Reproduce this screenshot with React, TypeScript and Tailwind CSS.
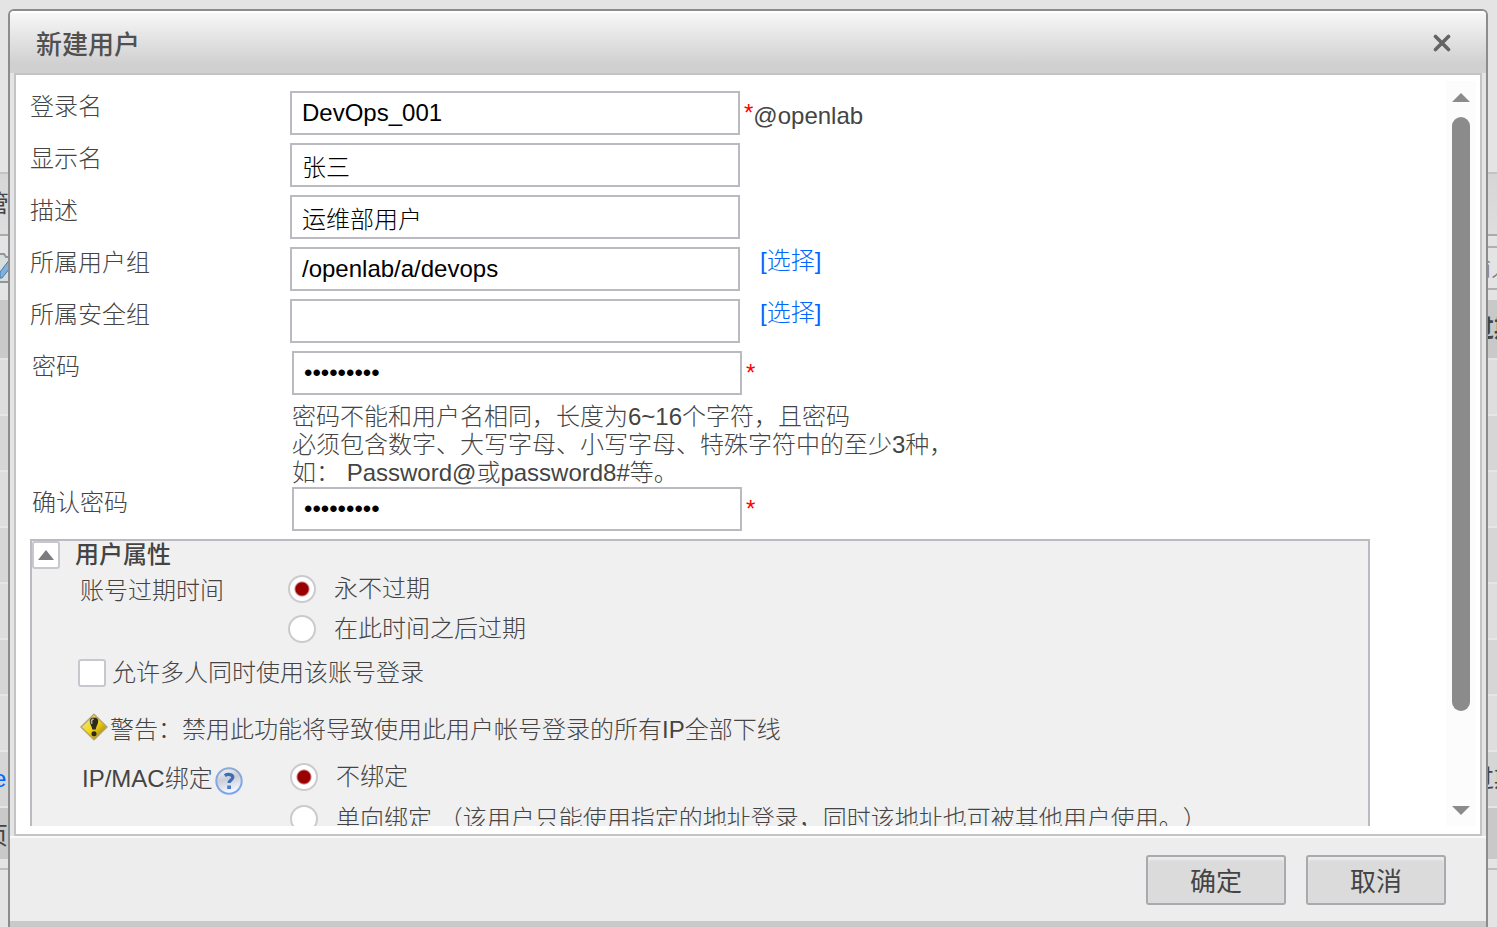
import type { ReactNode } from "react";

const inputClass =
  "h-11 w-[450px] shrink-0 border-2 border-[#bbbac1] bg-white px-[10px] text-black outline-none";

const radioClass =
  "size-7 shrink-0 appearance-none rounded-full border-2 border-[#cbcbcd] bg-white checked:bg-[radial-gradient(circle,#990000_6px,#ffffff_8px)]";

type FieldProps = {
  id: string;
  label: string;
  value: string;
  type?: string;
  inset?: boolean;
  required?: boolean;
  children?: ReactNode;
};

function Field({ id, label, value, type = "text", inset, required, children }: FieldProps) {
  return (
    <div className={inset ? "flex items-start pl-[2px]" : "flex items-start"}>
      <label htmlFor={id} className="w-[260px] shrink-0 pt-[2px]">
        {label}
      </label>
      <input id={id} type={type} defaultValue={value} className={inputClass} />
      {required && <span className="pt-2 pl-1 text-[#ff0000]">*</span>}
      {children}
    </div>
  );
}

function SelectLink() {
  return (
    <a href="#select" className="ml-5 text-[#0066ff]">
      [选择]
    </a>
  );
}

function Radio({ name, label, checked }: { name: string; label: string; checked?: boolean }) {
  return (
    <label className="flex items-center gap-[18px] whitespace-nowrap">
      <input type="radio" name={name} defaultChecked={checked} className={radioClass} />
      <span>{label}</span>
    </label>
  );
}

function WarningIcon() {
  return (
    <svg viewBox="0 0 28 28" className="size-7 shrink-0" aria-hidden="true">
      <defs>
        <linearGradient id="warn" x1="0" y1="0" x2="1" y2="1">
          <stop offset="0.2" stopColor="#efe27a" />
          <stop offset="0.5" stopColor="#f3d714" />
          <stop offset="0.85" stopColor="#a8820a" />
        </linearGradient>
      </defs>
      <path d="M14 1.2 27 14 14 26.800 1 14Z" fill="url(#warn)" stroke="#b3a56c" strokeWidth="1.500" strokeLinejoin="round" />
      <path d="M14 4.500c-3.200 0-4.600 2-4.200 4.500.5 2.900 2.200 4.300 2.500 7.600h3.400c.3-3.300 2-4.700 2.500-7.600.4-2.500-1-4.500-4.200-4.500Z" fill="#2b2a1c" />
      <path d="M13 6.200c-1.600.7-1.900 2.300-1.200 3.900" fill="none" stroke="#b5b3a0" strokeWidth="1.600" strokeLinecap="round" />
      <circle cx="14" cy="20.800" r="2.500" fill="#2b2a1c" />
    </svg>
  );
}

function HelpIcon() {
  return (
    <svg viewBox="0 0 28 28" className="size-7" aria-hidden="true">
      <defs>
        <linearGradient id="help" x1="0" y1="0" x2="0.3" y2="1">
          <stop offset="0" stopColor="#f6f8fc" />
          <stop offset="0.5" stopColor="#c9ced8" />
          <stop offset="1" stopColor="#f3f7ff" />
        </linearGradient>
        <linearGradient id="ring" x1="0" y1="0" x2="0" y2="1">
          <stop offset="0" stopColor="#8fa9d3" />
          <stop offset="1" stopColor="#7ba4f0" />
        </linearGradient>
      </defs>
      <circle cx="14" cy="14" r="12.700" fill="url(#help)" stroke="url(#ring)" strokeWidth="2" />
      <path d="M9.800 8.600c2.600-1.700 8.200-1.700 8 1.900-.1 2.400-3.700 2.600-3.800 5.500" fill="none" stroke="#3f6cb3" strokeWidth="3.200" />
      <rect x="12.200" y="18.500" width="3.800" height="3.500" fill="#4a7bd0" />
    </svg>
  );
}

const listRows = [
  "bg-[#dedede]",
  "bg-[#d6d6d6]",
  "bg-[#dedede]",
  "bg-[#d6d6d6]",
  "bg-[#dedede]",
  "bg-[#d6d6d6]",
  "bg-[#dedede]",
];

function BackgroundPage() {
  return (
    <div className="flex h-full flex-col overflow-hidden whitespace-nowrap" aria-hidden="true">
      <div className="h-[172px] shrink-0" />
      <div className="flex h-16 shrink-0 items-center border-y-2 border-t-[#c3c3c3] border-b-[#ababaf] bg-linear-to-b from-[#d6d6d6] to-[#dedede] font-normal">
        <span className="-ml-[15px]">管</span>
      </div>
      <div className="flex h-16 shrink-0 items-center justify-between">
        <svg viewBox="0 0 10 32" className="h-8 w-[10px]">
          <path d="M0 2h4l2 3h3v25H0" fill="#d9dddd" stroke="#8f979d" strokeWidth="2" />
          <path d="M0 20 10 7v9L2 26H0Z" fill="#7fb0de" stroke="#467aa9" strokeWidth="1" />
        </svg>
        <div className="flex h-11 w-4 items-center justify-end border-y-2 border-[#b0b0b4] text-[#777]">
          <span className="-mr-[18px]">输入</span>
        </div>
      </div>
      <div className="flex h-[60px] shrink-0 items-center justify-end border-b-2 border-[#e4e4e4] bg-[#c9c9c9] font-bold">
        <span className="-mr-[21px]">过期</span>
      </div>
      {listRows.map((row, index) => (
        <div key={index} className={`h-14 shrink-0 border-b-2 border-[#e6e6e6] ${row}`} />
      ))}
      <div className="flex h-14 shrink-0 items-center justify-between border-b-2 border-[#e6e6e6] bg-[#d6d6d6] font-normal">
        <span className="-ml-[7px] text-[#0066ff]">e</span>
        <span className="-mr-[21px]">过期</span>
      </div>
      <div className="flex h-[51px] shrink-0 items-center bg-[#c9c9c9] pt-1 font-normal">
        <span className="-ml-4">页</span>
      </div>
      <div className="h-[11px] shrink-0 border-b-2 border-[#bfbfc3]" />
    </div>
  );
}

function ScrollBar() {
  return (
    <div className="flex w-[30px] shrink-0 flex-col items-center bg-[#fcfcfc] pt-3 pb-[11px]" aria-hidden="true">
      <svg viewBox="0 0 18 9" className="h-[9px] w-[18px] shrink-0">
        <path d="M9 0 18 9H0Z" fill="#8b8b8b" />
      </svg>
      <div className="mt-[15px] w-[18px] grow-[594] rounded-full bg-[#8b8b8b]" />
      <div className="grow-[95]" />
      <svg viewBox="0 0 18 9" className="h-[9px] w-[18px] shrink-0">
        <path d="M0 0H18L9 9Z" fill="#8b8b8b" />
      </svg>
    </div>
  );
}

function UserAttributes() {
  return (
    <section className="mt-2 mr-[76px] border-2 border-[#bbbac1] bg-[#f0f0f0]">
      <div className="flex h-7 items-center">
        <button
          type="button"
          aria-label="收起用户属性"
          className="flex size-7 items-center justify-center rounded-[3px] border-2 border-[#c8c7cd] bg-white"
        >
          <svg viewBox="0 0 16 10" className="h-[10px] w-4">
            <path d="M8 0 16 10H0Z" fill="#7c7c7e" />
          </svg>
        </button>
        <h2 className="pl-[15px] font-medium">用户属性</h2>
      </div>

      <div className="flex pl-12" role="radiogroup" aria-labelledby="expiry">
        <span id="expiry" className="w-52 shrink-0 pt-2">
          账号过期时间
        </span>
        <div className="grid auto-rows-[40px]">
          <Radio name="expiry" label="永不过期" checked />
          <Radio name="expiry" label="在此时间之后过期" />
        </div>
      </div>

      <label className="flex h-12 items-center gap-[6px] pl-[46px]">
        <input
          type="checkbox"
          className="size-7 shrink-0 appearance-none rounded-[3px] border-2 border-[#c8c7cd] bg-white"
        />
        <span>允许多人同时使用该账号登录</span>
      </label>

      <p className="mt-4 mb-[11px] flex h-8 items-start gap-[2px] pl-12 whitespace-nowrap">
        <WarningIcon />
        <span className="pt-[3px]">警告：禁用此功能将导致使用此用户帐号登录的所有IP全部下线</span>
      </p>

      <div className="flex pl-[50px]" role="radiogroup" aria-labelledby="binding">
        <div className="flex w-52 shrink-0 items-start gap-[2px] pt-[9px]">
          <span id="binding">IP/MAC绑定</span>
          <button type="button" aria-label="帮助" className="mt-[2px]">
            <HelpIcon />
          </button>
        </div>
        <div className="grid auto-rows-[42px]">
          <Radio name="binding" label="不绑定" checked />
          <Radio name="binding" label="单向绑定 （该用户只能使用指定的地址登录，同时该地址也可被其他用户使用。）" />
        </div>
      </div>
    </section>
  );
}

const dialogButton =
  "h-[50px] w-[140px] rounded-[3px] border-2 border-[#a9a9af] bg-[#dbdbdb] pt-1 text-[26px] font-normal text-[#444] shadow-[inset_0_3px_2px_#ebebeb]";

export default function App() {
  return (
    <div className="relative h-screen overflow-hidden bg-[#e4e4e4] font-['Liberation_Sans','Noto_Sans_CJK_SC',sans-serif] text-[24px] leading-[28px] font-light text-[#444] [text-spacing-trim:space-all]">
      <BackgroundPage />
      <div
        role="dialog"
        aria-labelledby="title"
        className="absolute top-[9px] right-[9px] bottom-0 left-2 flex flex-col rounded-t-[6px] border-2 border-b-0 border-[#8c8c8c] bg-[#e4e4e4]"
      >
        <header className="flex h-[62px] shrink-0 items-center justify-between rounded-t-[4px] border-t-2 border-white bg-linear-to-b from-[#f7f7f7] to-[#d0d0d0] to-85% pr-[34px] pl-[26px]">
          <h1 id="title" className="pt-1 text-[26px] font-medium text-[#505050]">
            新建用户
          </h1>
          <button type="button" aria-label="关闭" className="p-px">
            <svg viewBox="0 0 18 18" className="size-[18px]">
              <path d="M2.500 2.500 15.500 15.500M15.500 2.500 2.500 15.500" stroke="#646464" strokeWidth="3.600" strokeLinecap="round" />
            </svg>
          </button>
        </header>

        <main className="mx-1 flex min-h-0 flex-1 border-2 border-[#c4c4c6] bg-white pt-[6px] pr-1 pb-2 pl-[14px]">
          <form className="min-w-0 flex-1 overflow-hidden pt-[10px]">
            <div className="flex flex-col gap-2">
              <Field id="login" label="登录名" value="DevOps_001" required>
                <span className="pt-[11px]">@openlab</span>
              </Field>
              <Field id="display" label="显示名" value="张三" />
              <Field id="description" label="描述" value="运维部用户" />
              <Field id="group" label="所属用户组" value="/openlab/a/devops">
                <SelectLink />
              </Field>
              <Field id="security" label="所属安全组" value="">
                <SelectLink />
              </Field>
              <Field id="password" label="密码" value="Passwd@01" type="password" inset required />
            </div>
            <p className="pt-2 pl-[262px] whitespace-nowrap">
              密码不能和用户名相同，长度为6~16个字符，且密码
              <br />
              必须包含数字、大写字母、小写字母、特殊字符中的至少3种，
              <br />
              如： Password@或password8#等。
            </p>
            <Field id="confirm" label="确认密码" value="Passwd@01" type="password" inset required />
            <UserAttributes />
          </form>
          <ScrollBar />
        </main>

        <footer className="flex h-[91px] shrink-0 items-start justify-end gap-5 border-t-2 border-b-[6px] border-t-[#fafafa] border-b-[#c9c9c9] bg-[#ededed] pt-[17px] pr-10">
          <button type="button" className={dialogButton}>
            确定
          </button>
          <button type="button" className={dialogButton}>
            取消
          </button>
        </footer>
      </div>
    </div>
  );
}
